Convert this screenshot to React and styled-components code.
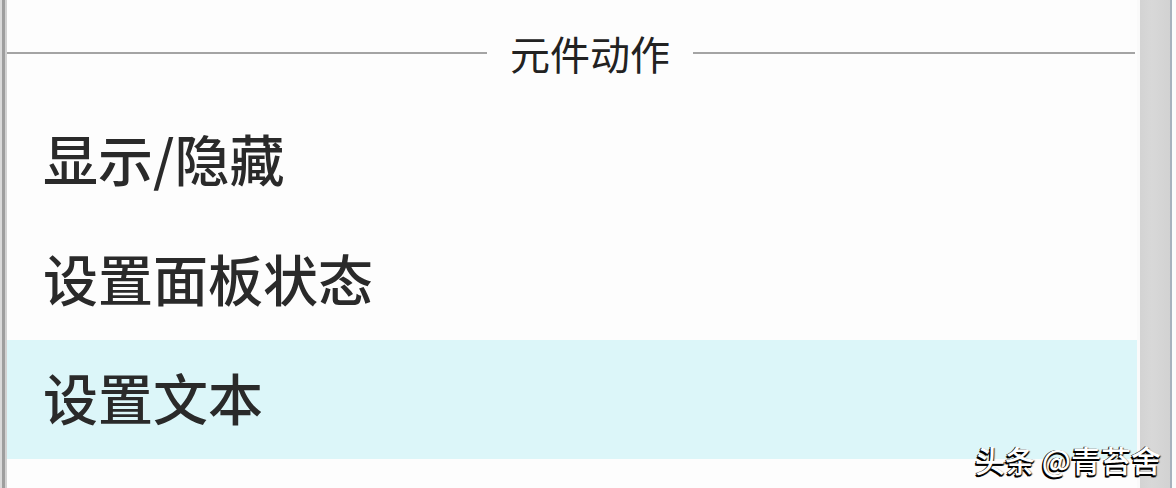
import React from "react";
import styled, { createGlobalStyle } from "styled-components";

const GlobalStyle = createGlobalStyle`
  html, body { margin: 0; padding: 0; background: #fdfdfd; }
  body { font-family: "Noto Sans CJK SC", "Noto Sans", sans-serif; }
`;

const Frame = styled.div`
  position: relative;
  display: flex;
  width: 1176px;
  height: 488px;
  overflow: hidden;
  background: #fdfdfd;
`;

const LeftEdge = styled.div`
  flex: 0 0 7px;
  background: linear-gradient(
    to right,
    #dadada 0 2px,
    #9e9e9e 2px 5px,
    #d2d2d2 5px 7px
  );
`;

const Panel = styled.div`
  flex: 0 0 1130px;
  display: flex;
  flex-direction: column;
  background: #fdfdfd;
`;

const Header = styled.div`
  height: 100px;
  box-sizing: border-box;
  padding-top: 6px;
  display: flex;
  align-items: center;
  gap: 23px;
`;

const Rule = styled.div`
  height: 2px;
  background: #a4a4a4;
  flex: ${(p) => (p.$fixed ? `0 0 ${p.$fixed}px` : "1 1 auto")};
  margin-right: ${(p) => (p.$fixed ? 0 : 2)}px;
`;

const Title = styled.div`
  font-size: 40px;
  line-height: 1;
  color: #222;
`;

const Row = styled.div`
  height: ${(p) => p.$h}px;
  box-sizing: border-box;
  display: flex;
  align-items: center;
  padding-left: 36px;
  padding-bottom: 6px;
  background: ${(p) => (p.$active ? "#dcf6f9" : "transparent")};
  font-size: 55px;
  font-weight: 500;
  line-height: 1;
  color: #2a2a2a;
`;

const Gutter = styled.div`
  flex: 0 0 3px;
  background: #fafafa;
`;

const Scrollbar = styled.div`
  flex: 0 0 30px;
  background: linear-gradient(
    to right,
    #d3d3d3 0,
    #d8d8d8 40%,
    #d2d2d2 100%
  );
`;

const RightEdge = styled.div`
  flex: 0 0 2px;
  background: #a7b2bd;
`;

const Rest = styled.div`
  flex: 1 1 auto;
  background: #fbfbfb;
`;

const Watermark = styled.div`
  position: absolute;
  right: 15px;
  bottom: 14px;
  font-size: 30px;
  font-weight: 500;
  line-height: 1;
  color: #fff;
  white-space: pre;
  text-shadow: -1.5px 1.5px 0 #000, -1px 0 0 #111, 0 1.5px 0 #111, 1px 1px 1px #333;
`;

const items = [
  { label: "显示/隐藏", h: 120 },
  { label: "设置面板状态", h: 120 },
  { label: "设置文本", h: 119, active: true },
];

export default function App() {
  return (
    <>
      <GlobalStyle />
      <Frame>
        <LeftEdge />
        <Panel>
          <Header>
            <Rule $fixed={480} />
            <Title>元件动作</Title>
            <Rule />
          </Header>
          {items.map((it) => (
            <Row key={it.label} $h={it.h} $active={it.active}>
              {it.label}
            </Row>
          ))}
        </Panel>
        <Gutter />
        <Scrollbar />
        <RightEdge />
        <Rest />
        <Watermark>头条 @青苔舍</Watermark>
      </Frame>
    </>
  );
}
